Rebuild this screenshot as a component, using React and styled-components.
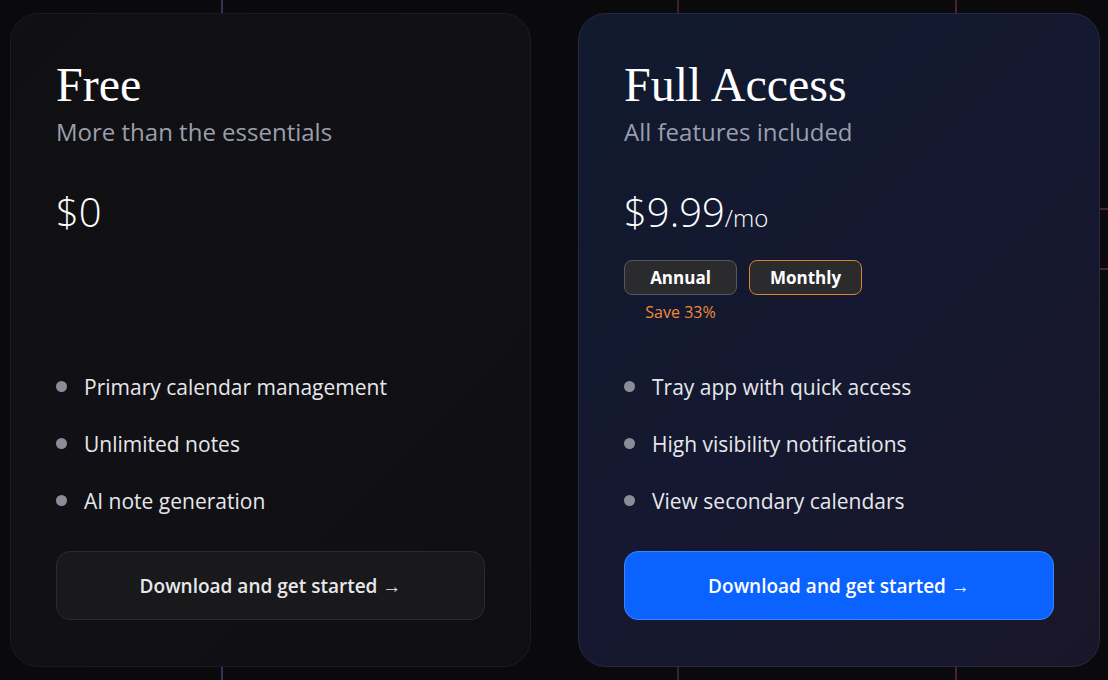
import styled, { createGlobalStyle } from "styled-components";

const GlobalStyle = createGlobalStyle`
    html, body {
        margin: 0;
        padding: 0;
        background: #0a0a0d;
    }
    * {
        box-sizing: border-box;
    }
`

const plans = [
    {
        id: "free",
        title: "Free",
        subtitle: "More than the essentials",
        price: "$0",
        features: ["Primary calendar management", "Unlimited notes", "AI note generation"],
    },
    {
        id: "full",
        title: "Full Access",
        subtitle: "All features included",
        price: "$9.99",
        unit: "/mo",
        billing: true,
        featured: true,
        features: ["Tray app with quick access", "High visibility notifications", "View secondary calendars"],
    },
];

const PlanCard = ({ plan }) => {
    return (
        <Card $featured={plan.featured}>
            <Title>{plan.title}</Title>
            <SubTitle>{plan.subtitle}</SubTitle>
            <PriceBlock>
                <Price>
                    {plan.price}
                    {plan.unit && <Unit>{plan.unit}</Unit>}
                </Price>
                {plan.billing && (
                    <>
                        <Toggle>
                            <ToggleButton>Annual</ToggleButton>
                            <ToggleButton $active>Monthly</ToggleButton>
                        </Toggle>
                        <Save>Save 33%</Save>
                    </>
                )}
            </PriceBlock>
            <Features>
                {plan.features.map((f) => (
                    <Feature key={f}>
                        <Dot />
                        {f}
                    </Feature>
                ))}
            </Features>
            <CTA $primary={plan.featured}>Download and get started →</CTA>
        </Card>
    );
}

const App = () => {
    return (
        <Page>
            <GlobalStyle />
            <Grid>
                {plans.map((p) => (
                    <PlanCard key={p.id} plan={p} />
                ))}
            </Grid>
        </Page>
    );
}

export default App;


const Page = styled.div`
    width: 1108px;
    height: 680px;
    overflow: hidden;
    padding: 13px 8px 13px 10px;
    background-color: #0a0a0d;
    background-image:
        linear-gradient(90deg, transparent 221px, #34345a 221px, #34345a 223px, transparent 223px),
        linear-gradient(90deg, transparent 677px, #3d1f30 677px, #3d1f30 679px, transparent 679px),
        linear-gradient(90deg, transparent 955px, #4a2236 955px, #4a2236 957px, transparent 957px),
        linear-gradient(180deg, transparent 208px, #4a2236 208px, #4a2236 210px, transparent 210px),
        linear-gradient(180deg, transparent 268px, #4a2236 268px, #4a2236 270px, transparent 270px);
    background-size: 100% 100%, 100% 100%, 100% 100%, 8px 100%, 8px 100%;
    background-position: 0 0, 0 0, 0 0, right top, right top;
    background-repeat: no-repeat;
    font-family: "Open Sans", "Noto Sans", sans-serif;
`

const Grid = styled.div`
    display: grid;
    grid-template-columns: 521px 522px;
    column-gap: 47px;
    height: 654px;
`

const Card = styled.div`
    display: flex;
    flex-direction: column;
    padding: 44px 45px 46px 45px;
    border-radius: 28px;
    border: 1px solid ${p => p.$featured ? "#262a40" : "#1b1b21"};
    background: ${p => p.$featured
        ? "linear-gradient(135deg, #111a2e 0%, #141830 50%, #1a1629 100%)"
        : "linear-gradient(135deg, #101013 0%, #111115 50%, #0f0f13 100%)"};
`

const Title = styled.h2`
    margin: 0;
    font-family: "Liberation Serif", "DejaVu Serif", serif;
    font-weight: 400;
    font-size: 48px;
    line-height: 53px;
    color: #ffffff;
`

const SubTitle = styled.p`
    margin: 6px 0 0;
    font-size: 24px;
    line-height: 30px;
    color: #9a9fab;
`

const PriceBlock = styled.div`
    margin-top: 40px;
    height: 186px;
    display: flex;
    flex-direction: column;
    align-items: flex-start;
`

const Price = styled.div`
    font-size: 40px;
    line-height: 50px;
    font-weight: 300;
    color: #ffffff;
`

const Unit = styled.span`
    font-size: 24px;
    font-weight: 300;
`

const Toggle = styled.div`
    display: flex;
    gap: 12px;
    margin-top: 17px;
`

const ToggleButton = styled.button`
    width: 113px;
    height: 35px;
    border-radius: 8px;
    background: #2b2b2e;
    border: 1.5px solid ${p => p.$active ? "#d9822f" : "#56565e"};
    color: #ffffff;
    font-family: "Open Sans", "Noto Sans", sans-serif;
    font-weight: 700;
    font-size: 17px;
    cursor: pointer;
`

const Save = styled.span`
    width: 113px;
    margin-top: 6px;
    text-align: center;
    font-size: 16px;
    color: #f0893a;
`

const Features = styled.ul`
    list-style: none;
    margin: 0;
    padding: 0;
    display: flex;
    flex-direction: column;
    gap: 27.6px;
`

const Feature = styled.li`
    display: flex;
    align-items: center;
    gap: 17px;
    font-size: 21px;
    line-height: 29.4px;
    color: #e6e7ea;
`

const Dot = styled.span`
    width: 11px;
    height: 11px;
    border-radius: 50%;
    background: #8a8c97;
    margin-top: -3px;
    flex-shrink: 0;
`

const CTA = styled.button`
    margin-top: auto;
    height: 69px;
    width: 100%;
    border-radius: 14px;
    border: 1px solid ${p => p.$primary ? "#3a84ff" : "#2a2a30"};
    background: ${p => p.$primary ? "#0a63ff" : "#19191c"};
    color: ${p => p.$primary ? "#ffffff" : "#e8e8ea"};
    font-family: "Open Sans", "Noto Sans", sans-serif;
    font-size: 19px;
    font-weight: 600;
    cursor: pointer;
`
